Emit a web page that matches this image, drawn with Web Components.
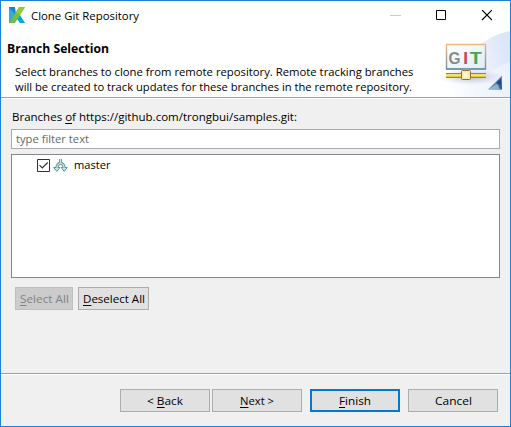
<!DOCTYPE html>
<html lang="en"><head><meta charset="utf-8"><title>Clone Git Repository</title>
<style>html,body{margin:0;height:100%;overflow:hidden}body{font:11.6px/15px "Open Sans","Noto Sans",sans-serif;color:#000}</style></head>
<body><clone-dialog></clone-dialog>
<script>
const define=(name,html,init)=>customElements.define(name,class extends HTMLElement{
  connectedCallback(){
    if(this.shadowRoot)return;
    const t=document.createElement('template');t.innerHTML=html;
    this.attachShadow({mode:'open'}).append(t.content.cloneNode(true));
    if(init)init.call(this);
  }
});

// Text with a fixed advance width; glyphs are condensed to fill it.
define('ui-text',`<style>:host{display:inline-block;white-space:pre;flex:none;height:15px;line-height:15px}span{display:inline-block;transform-origin:0 0}
::slotted(u){text-underline-offset:2px;text-decoration-skip-ink:none;text-decoration-thickness:1px}</style><span><slot></slot></span>`,function(){
  const s=this.shadowRoot.querySelector('span'),w=+this.getAttribute('w');
  s.style.transform='scaleX('+w/s.getBoundingClientRect().width+')';
  this.style.width=w+'px';
});

define('ui-button',`<style>:host{display:flex;box-sizing:border-box;height:23px;border:1px solid #adadad;background:#e1e1e1;align-items:center;justify-content:center;flex:none}
:host([disabled]){background:#ccc;border-color:#bfbfbf;color:#838383}:host([primary]){border:2px solid #0078d7}</style><slot></slot>`);

define('app-logo',`<style>:host,svg{display:block;width:16px;height:16px}</style><svg viewBox="0 0 16 16">
<path d="M0 0H6L7 7 1 16H0Z" fill="#1886cc"/><path d="M0 1 6 7 0 16Z" fill="#38a9dc"/><path d="M10 0H16L6 16H0Z" fill="#72bf44"/><path d="M10 0H16L11 8 7 6Z" fill="#94ca3d"/><path d="M11 8 16 16H11L8 12Z" fill="#08a5e1"/></svg>`);

define('window-controls',`<style>:host,svg{display:block;width:102px;height:11px}</style><svg viewBox="0 0 102 11" fill="none">
<path d="M0 5.5H11" stroke="#ccc"/><path d="M46.5.5H55.5V9.5H46.5Z" stroke="#000"/><path d="M92 0 102 10M102 0 92 10" stroke="#000" stroke-width="1.1"/></svg>`);

define('title-bar',`<style>:host{display:flex;height:29px;padding:0 17px 0 8px;box-sizing:border-box;align-items:flex-start}
app-logo{margin-top:6px}ui-text{margin:7px 0 0 6px}window-controls{margin:9px 1px 0 auto}</style>
<app-logo></app-logo><ui-text w="108">Clone Git Repository</ui-text><window-controls></window-controls>`);

define('git-banner',`<style>:host,svg{display:block;width:75px;height:67px}svg{font:bold 17px "Liberation Sans",sans-serif}</style>
<svg viewBox="435 30 75 67"><defs>
<linearGradient id="sky" gradientUnits="userSpaceOnUse" x1="445" y1="80" x2="510" y2="60"><stop stop-color="#fff"/><stop offset=".55" stop-color="#eff3fc"/><stop offset="1" stop-color="#dde5f8"/></linearGradient>
<linearGradient id="tri" x1="0" x2="1" y2="1"><stop stop-color="#b8d5eb"/><stop offset=".5" stop-color="#6d95c0"/><stop offset="1" stop-color="#234a88"/></linearGradient>
<linearGradient id="brd" x2="0" y2="1"><stop stop-color="#efb87f"/><stop offset="1" stop-color="#6d8fa3"/></linearGradient>
<linearGradient id="scr" x1="0" y1="0" x2="1" y2="1"><stop stop-color="#fff"/><stop offset="1" stop-color="#dfecf5"/></linearGradient>
<radialGradient id="shade"><stop stop-color="#877aa5" stop-opacity=".5"/><stop offset="1" stop-color="#b4abc8" stop-opacity="0"/></radialGradient></defs>
<path d="M440 97Q446 70 470 54Q486 36 510 31V97Z" fill="url(#sky)"/><path d="M474 97Q480 72 510 62V97Z" fill="#f3f6fd" opacity=".65"/>
<ellipse cx="471" cy="77" rx="33" ry="8" fill="url(#shade)"/>
<path d="M446.5 44.5H485.5V69H446.5Z" fill="url(#scr)" stroke="url(#brd)" stroke-width="1.4"/><path d="M446 69H486" stroke="#6d93aa" stroke-width="1.5"/>
<text x="448.5" y="63.5" textLength="12" lengthAdjust="spacingAndGlyphs" fill="#8b8b8b">G</text><text x="463.2" y="63.5" fill="#c74451">I</text><text x="469.7" y="63.5" textLength="12" lengthAdjust="spacingAndGlyphs" fill="#46a553">T</text>
<path d="M446 73H486V78H446Z" fill="#dfcd42"/><path d="M446 73.5H486M446 77.5H486" stroke="#a3841d"/><path d="M446 75H486" stroke="#fff7a0"/>
<path d="M463 69H469V72H463Z" fill="#c4a04b"/><rect x="461.5" y="70.5" width="9" height="9" rx="1" fill="#f9e9a9" stroke="#967235"/><rect x="463.5" y="72.5" width="4" height="5" fill="#fff7d0"/>
<path d="M488 89.5 502 75.5V89.5Z" fill="url(#tri)"/><path d="M489 89 497 84 500 89Z" fill="#a8c4e0" opacity=".75"/><path d="M496 83 501 78V86Z" fill="#214b8a"/></svg>`);

define('wizard-header',`<style>:host{display:flex;border-bottom:1px solid #a0a0a0;justify-content:space-between}
.copy{display:flex;flex-direction:column;padding:11px 0 0 6px}.copy ui-text{margin-left:8px}.copy .head{font-weight:700;font-size:12.6px;margin:0 0 8px}</style>
<div class="copy"><ui-text class="head" w="102">Branch Selection</ui-text><ui-text w="398.5">Select branches to clone from remote repository. Remote tracking branches</ui-text><ui-text w="397">will be created to track updates for these branches in the remote repository.</ui-text></div><git-banner></git-banner>`);

define('branch-item',`<style>:host{display:flex;height:20px;padding:0 0 0 25px;align-items:center}svg{display:block;width:31px;height:15px;flex:none}ui-text{margin:-1px 0 0 6px}</style>
<svg viewBox="0 0 31 15"><path d="M.5 1.5H12.5V13.5H.5Z" fill="#fff" stroke="#333"/><path d="M2.5 7.2 5.3 10 10.7 4.5" fill="none" stroke="#333" stroke-width="1.2"/>
<g transform="translate(16 1)"><path d="M7.5 0V4.5M7.5 4Q3.8 5.3 3.8 9.5M7.5 4Q11.2 5.3 11.2 9.5" fill="none" stroke="#5b999b" stroke-width="3"/><path d="M.7 8.5H6.9L3.8 12.4ZM8.1 8.5H14.3L11.2 12.4Z" fill="#c5e7e5" stroke="#5b999b"/><path d="M7.5 0V4.5M7.5 4Q3.8 5.3 3.8 10M7.5 4Q11.2 5.3 11.2 10" fill="none" stroke="#c9e9e7" stroke-width="1.2"/></g></svg>
<ui-text w="36.5"><slot></slot></ui-text>`,function(){
  // The label arrives through a nested slot, so measure it from here.
  const t=this.shadowRoot.querySelector('ui-text'),s=t.shadowRoot.querySelector('span');
  s.style.transform='none';s.style.transform='scaleX('+36.5/s.getBoundingClientRect().width+')';
});

define('branch-panel',`<style>:host{display:flex;flex-direction:column;flex:1;padding:10px 10px 0;border-top:1px solid #fff;box-sizing:border-box}
.label{margin-left:1px}.filter{height:20px;box-sizing:border-box;border:1px solid #ababab;background:#fff;margin-top:5px;padding:1px 4px;color:#686868}
.list{height:124px;box-sizing:border-box;border:1px solid #828790;background:#fff;margin-top:5px}.actions{display:flex;gap:5px;margin:9px 0 0 4px}</style>
<ui-text class="label" w="285">Branches <u>o</u>f https://github.com/trongbui/samples.git:</ui-text><div class="filter"><ui-text w="73">type filter text</ui-text></div>
<div class="list"><branch-item>master</branch-item></div><div class="actions"><ui-button disabled style="width:58px"><ui-text w="49"><u>S</u>elect All</ui-text></ui-button><ui-button style="width:71px"><ui-text w="62"><u>D</u>eselect All</ui-text></ui-button></div>`);

define('wizard-footer',`<style>:host{display:flex;height:53px;box-sizing:border-box;border-top:1px solid #a0a0a0;box-shadow:inset 0 1px #fff;padding:15px 12px 0 0;justify-content:flex-end;gap:8px}.pair{display:flex;gap:2px}ui-button{width:90px}</style>
<div class="pair"><ui-button><ui-text w="36">&lt; <u>B</u>ack</ui-text></ui-button><ui-button><ui-text w="34"><u>N</u>ext &gt;</ui-text></ui-button></div><ui-button primary><ui-text w="32"><u>F</u>inish</ui-text></ui-button><ui-button><ui-text w="37">Cancel</ui-text></ui-button>`);

define('clone-dialog',`<style>:host{display:flex;flex-direction:column;width:511px;height:427px;box-sizing:border-box;border:1px solid #1883d7;background:#f0f0f0}
title-bar,wizard-header{background:#fff;flex:none}wizard-header{height:67px}wizard-footer{flex:none}</style>
<title-bar></title-bar><wizard-header></wizard-header><branch-panel></branch-panel><wizard-footer></wizard-footer>`);
</script></body></html>
